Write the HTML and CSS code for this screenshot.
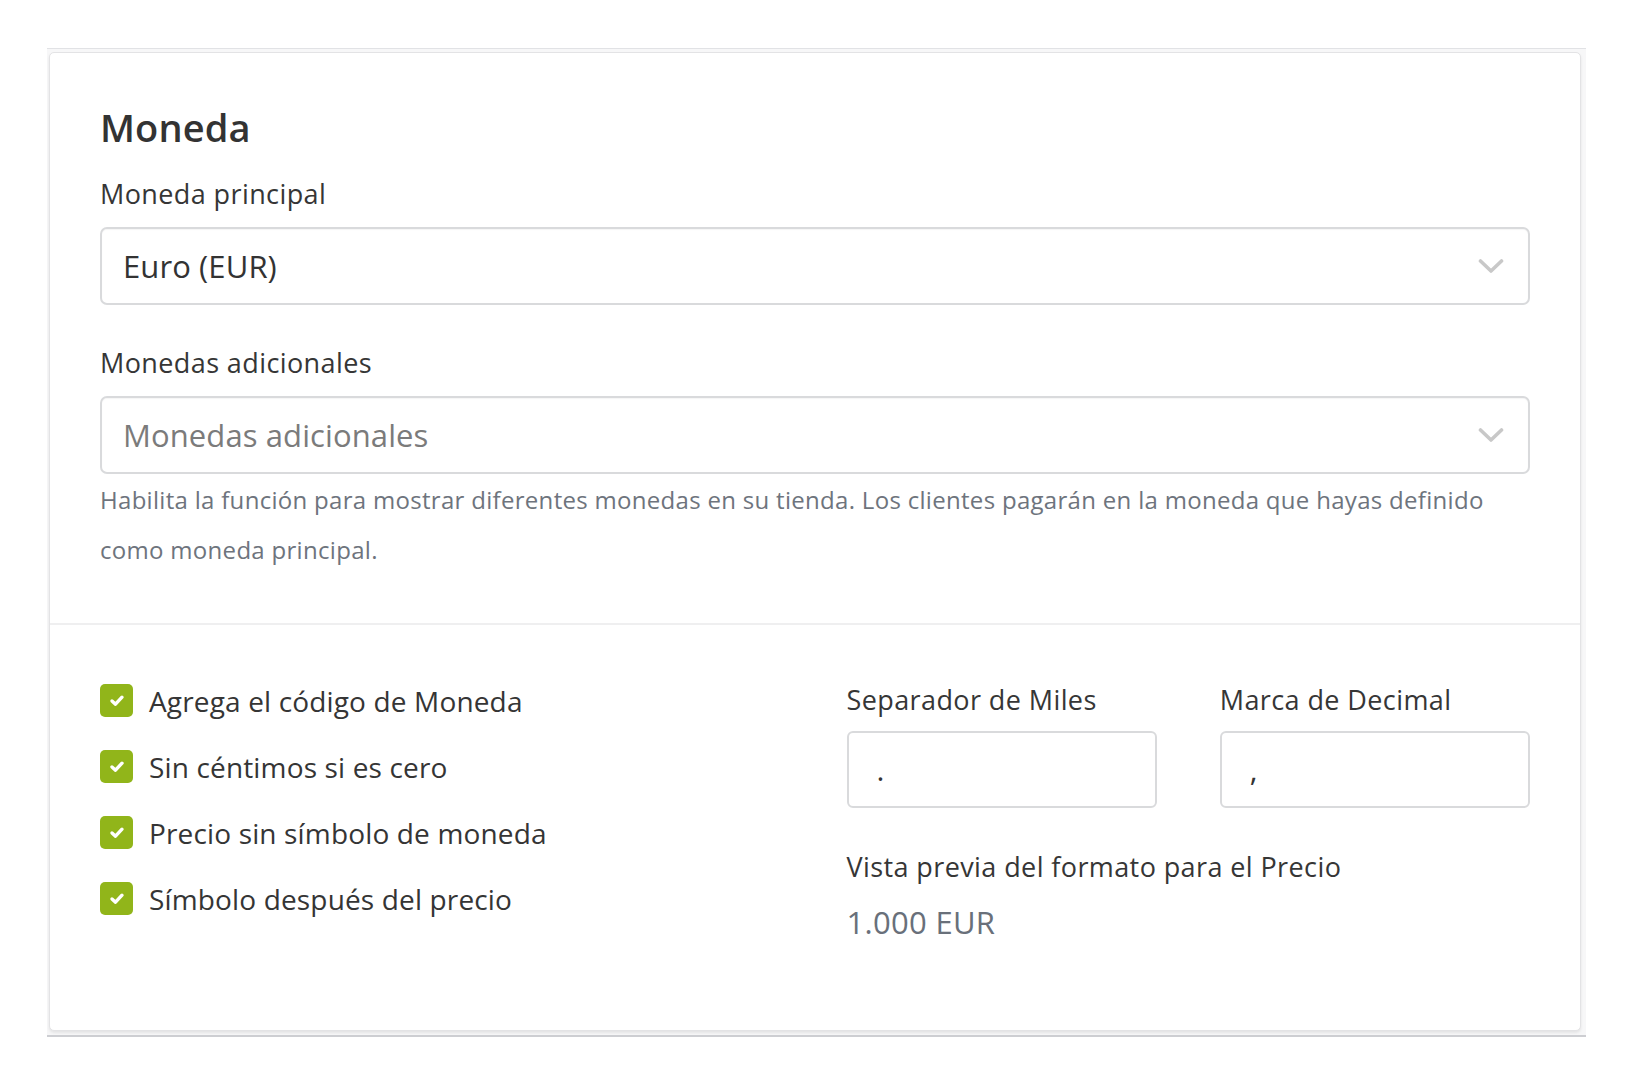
FILE: index.html
```html
<!DOCTYPE html>
<html lang="es">
<head>
<meta charset="utf-8">
<title>Moneda</title>
<link rel="stylesheet" href="styles.css">
</head>
<body>
<div class="page">
  <div class="panel">
    <div class="card">
      <div class="section-top">
        <h2 class="title">Moneda</h2>
        <div class="label">Moneda principal</div>
        <div class="select">
          <span class="select-value">Euro (EUR)</span>
          <svg class="chevron" width="26" height="16" viewBox="0 0 26 16"><polyline points="2.5,3 13,13 23.5,3" fill="none" stroke="#c8c8c8" stroke-width="3.6" stroke-linecap="round" stroke-linejoin="round"/></svg>
        </div>
        <div class="label label-gap">Monedas adicionales</div>
        <div class="select">
          <span class="select-value placeholder">Monedas adicionales</span>
          <svg class="chevron" width="26" height="16" viewBox="0 0 26 16"><polyline points="2.5,3 13,13 23.5,3" fill="none" stroke="#c8c8c8" stroke-width="3.6" stroke-linecap="round" stroke-linejoin="round"/></svg>
        </div>
        <p class="help">Habilita la función para mostrar diferentes monedas en su tienda. Los clientes pagarán en la moneda que hayas definido como moneda principal.</p>
      </div>
      <div class="divider"></div>
      <div class="section-bottom">
        <div class="checks">
          <div class="check-row"><span class="box"><svg width="16" height="13" viewBox="0 0 16 13"><polyline points="3,7 6.5,10.2 13,3.2" fill="none" stroke="#fff" stroke-width="3.4" stroke-linecap="round" stroke-linejoin="round"/></svg></span><span class="check-label">Agrega el código de Moneda</span></div>
          <div class="check-row"><span class="box"><svg width="16" height="13" viewBox="0 0 16 13"><polyline points="3,7 6.5,10.2 13,3.2" fill="none" stroke="#fff" stroke-width="3.4" stroke-linecap="round" stroke-linejoin="round"/></svg></span><span class="check-label">Sin céntimos si es cero</span></div>
          <div class="check-row"><span class="box"><svg width="16" height="13" viewBox="0 0 16 13"><polyline points="3,7 6.5,10.2 13,3.2" fill="none" stroke="#fff" stroke-width="3.4" stroke-linecap="round" stroke-linejoin="round"/></svg></span><span class="check-label">Precio sin símbolo de moneda</span></div>
          <div class="check-row"><span class="box"><svg width="16" height="13" viewBox="0 0 16 13"><polyline points="3,7 6.5,10.2 13,3.2" fill="none" stroke="#fff" stroke-width="3.4" stroke-linecap="round" stroke-linejoin="round"/></svg></span><span class="check-label">Símbolo después del precio</span></div>
        </div>
        <div class="format">
          <div class="sep-grid">
            <div class="field">
              <div class="label">Separador de Miles</div>
              <div class="input">.</div>
            </div>
            <div class="field">
              <div class="label">Marca de Decimal</div>
              <div class="input">,</div>
            </div>
          </div>
          <div class="label preview-label">Vista previa del formato para el Precio</div>
          <div class="preview">1.000 EUR</div>
        </div>
      </div>
    </div>
  </div>
</div>
</body>
</html>
```
FILE: styles.css
```css
* { box-sizing: border-box; }

html, body {
  margin: 0;
  padding: 0;
  background: #ffffff;
}

body {
  font-family: "Open Sans", Lato, "Liberation Sans", sans-serif;
  color: #353535;
}

.page {
  padding: 48px 0 0 47px;
  width: 1586px;
}

.panel {
  border-top: 1px solid #e1e2e5;
  border-bottom: 2px solid #cdced2;
  background: #f7f7f8;
  padding: 3px 5px 4px 2px;
}

.card {
  background: #ffffff;
  border: 1px solid #e3e3e5;
  border-radius: 5px;
  box-shadow: 0 2px 3px rgba(0, 0, 0, 0.08);
}

.section-top {
  padding: 51px 50px 48px 50px;
}

.title {
  margin: 0 0 26px 0;
  font-size: 38px;
  line-height: 46px;
  font-weight: 600;
  color: #333333;
  letter-spacing: 0.1px;
}

.label {
  font-size: 27px;
  line-height: 36px;
  color: #363636;
  letter-spacing: 0.4px;
}

.label-gap {
  margin-top: 40px;
}

.select {
  margin-top: 15px;
  height: 78px;
  border: 2px solid #d9dadc;
  border-radius: 7px;
  display: flex;
  align-items: center;
  justify-content: space-between;
  padding: 0 24px 0 21px;
  box-shadow: inset 0 1px 1px rgba(0, 0, 0, 0.04);
}

.select-value {
  font-size: 31px;
  color: #333333;
  letter-spacing: 0.1px;
}

.select-value.placeholder {
  color: #7b7b7b;
}

.chevron {
  display: block;
}

.help {
  margin: 1px 0 0 0;
  font-size: 24px;
  line-height: 50px;
  color: #6e747d;
  letter-spacing: 0.3px;
}

.divider {
  height: 2px;
  background: #efeff0;
}

.section-bottom {
  padding: 59px 50px 88px 50px;
  display: grid;
  grid-template-columns: 1fr 1fr;
  column-gap: 63px;
}

.checks {
  display: flex;
  flex-direction: column;
  gap: 33px;
}

.check-row {
  display: flex;
  align-items: center;
  height: 33px;
}

.box {
  width: 33px;
  height: 33px;
  border-radius: 5px;
  background: #91b51a;
  display: flex;
  align-items: center;
  justify-content: center;
  flex: none;
}

.box svg {
  display: block;
}

.check-label {
  margin-left: 16px;
  font-size: 28px;
  color: #353535;
  letter-spacing: 0.15px;
}

.format {
  margin-top: -2px;
}

.sep-grid {
  display: grid;
  grid-template-columns: 1fr 1fr;
  column-gap: 63px;
}

.input {
  margin-top: 13px;
  height: 77px;
  border: 2px solid #d9dadc;
  border-radius: 6px;
  padding: 0 28px;
  font-size: 30px;
  line-height: 73px;
  color: #333333;
}

.preview-label {
  margin-top: 41px;
}

.preview {
  margin-top: 17px;
  font-size: 31px;
  line-height: 40px;
  color: #69707a;
  letter-spacing: 0.3px;
}
```
